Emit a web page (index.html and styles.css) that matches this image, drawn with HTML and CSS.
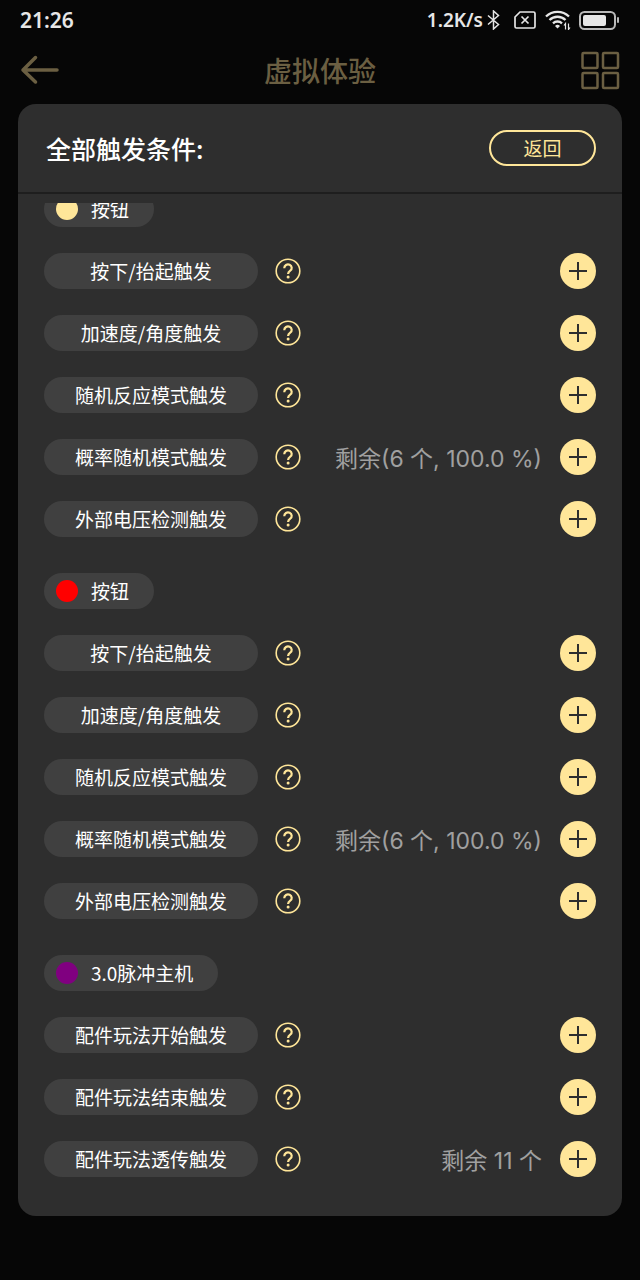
FILE: index.html
```html
<!DOCTYPE html>
<html lang="zh-CN">
<head>
	<meta charset="UTF-8">
	<meta name="viewport" content="width=device-width, initial-scale=1.0">
	<title>虚拟体验</title>
	<link rel="stylesheet" href="styles.css">
</head>

<body>
	<!-- Shared icons -->
	<svg class="sprite" aria-hidden="true">
		<symbol id="icon-help" viewBox="0 0 26 26">
			<circle cx="13" cy="13" r="11.8" fill="none" stroke="currentColor" stroke-width="1.6"/>
			<path d="M9.3 10.3v-.3a3.7 3.5 0 1 1 5.9 2.7c-1.4 1-2.1 1.6-2.1 3.3" fill="none" stroke="currentColor" stroke-width="2.2"/>
			<circle cx="13.1" cy="18.9" r="1.5" fill="currentColor"/>
		</symbol>
		<symbol id="icon-plus" viewBox="0 0 36 36">
			<path d="M18 9v18M9 18h18" fill="none" stroke="currentColor" stroke-width="2"/>
		</symbol>
	</svg>

	<div class="status-bar">
		<span class="status-time">21:26</span>
		<div class="status-icons">
			<span>1.2K/s</span>
			<svg class="icon-bt" width="13" height="20" viewBox="0 0 13 20" fill="none" stroke="currentColor" stroke-width="1.5">
				<path d="M1 5.5l10.5 9L6.5 19V1l5 4.5L1 14.5"/>
			</svg>
			<svg class="icon-sim" width="22" height="18" viewBox="0 0 22 18" fill="none" stroke="currentColor" stroke-width="1.7">
				<path d="M6 1h13.5A1.5 1.5 0 0 1 21 2.5v13a1.5 1.5 0 0 1-1.5 1.5h-17A1.5 1.5 0 0 1 1 15.5V6z"/>
				<path d="M7.5 5.5l7 7M14.5 5.5l-7 7"/>
			</svg>
			<svg class="icon-wifi" width="26" height="20" viewBox="0 0 26 20" fill="none" stroke="currentColor" stroke-width="2.3">
				<path d="M1 6.5a16.5 16.5 0 0 1 23 0M4.5 10a11.5 11.5 0 0 1 16 0M8 13.3a6.5 6.5 0 0 1 9 0"/>
				<path d="M12.5 18.5l-2.5-2.5a3.5 3.5 0 0 1 5 0z" fill="currentColor" stroke="none"/>
				<path d="M20.5 19.5v-6l-1.5 2M23.5 13.5v6l1.5-2" stroke-width="1.2"/>
			</svg>
			<svg class="icon-battery" width="41" height="19" viewBox="0 0 41 19">
				<rect x="1" y="1" width="35" height="17" rx="4.5" fill="none" stroke="#b8b8b8" stroke-width="2"/>
				<rect x="4" y="4" width="23" height="11" rx="2" fill="currentColor"/>
				<rect x="38" y="6" width="2" height="6" rx="1" fill="#b8b8b8"/>
			</svg>
		</div>
	</div>

	<header class="top-bar">
		<button class="icon-btn" aria-label="后退">
			<svg width="40" height="40" viewBox="0 0 40 40" fill="none" stroke="currentColor" stroke-width="3.5" stroke-linecap="round" stroke-linejoin="round">
				<path d="M37 20H3M15.5 7.5L3 20l12.5 12"/>
			</svg>
		</button>
		<h1>虚拟体验</h1>
		<button class="icon-btn" aria-label="菜单">
			<svg width="40" height="40" viewBox="0 0 40 40" fill="none" stroke="currentColor" stroke-width="2.5">
				<rect x="2.5" y="3" width="15" height="15" rx="1"/>
				<rect x="23" y="3" width="15" height="15" rx="1"/>
				<rect x="2.5" y="23" width="15" height="15" rx="1"/>
				<rect x="23" y="23" width="15" height="15" rx="1"/>
			</svg>
		</button>
	</header>

	<main class="panel">
		<div class="panel-head">
			<h2>全部触发条件:</h2>
			<button class="back-btn">返回</button>
		</div>

		<div class="panel-scroll">
			<div class="groups">
				<section class="group">
					<h3 class="chip"><i class="dot dot-yellow"></i>按钮</h3>
					<div class="row">
						<span class="pill">按下/抬起触发</span>
						<button class="help-btn" aria-label="说明"><svg><use href="#icon-help"/></svg></button>
						<button class="add-btn" aria-label="添加"><svg><use href="#icon-plus"/></svg></button>
					</div>
					<div class="row">
						<span class="pill">加速度/角度触发</span>
						<button class="help-btn" aria-label="说明"><svg><use href="#icon-help"/></svg></button>
						<button class="add-btn" aria-label="添加"><svg><use href="#icon-plus"/></svg></button>
					</div>
					<div class="row">
						<span class="pill">随机反应模式触发</span>
						<button class="help-btn" aria-label="说明"><svg><use href="#icon-help"/></svg></button>
						<button class="add-btn" aria-label="添加"><svg><use href="#icon-plus"/></svg></button>
					</div>
					<div class="row">
						<span class="pill">概率随机模式触发</span>
						<button class="help-btn" aria-label="说明"><svg><use href="#icon-help"/></svg></button>
						<span class="left">剩余(6 个, 100.0 %)</span>
						<button class="add-btn" aria-label="添加"><svg><use href="#icon-plus"/></svg></button>
					</div>
					<div class="row">
						<span class="pill">外部电压检测触发</span>
						<button class="help-btn" aria-label="说明"><svg><use href="#icon-help"/></svg></button>
						<button class="add-btn" aria-label="添加"><svg><use href="#icon-plus"/></svg></button>
					</div>
				</section>

				<section class="group">
					<h3 class="chip"><i class="dot dot-red"></i>按钮</h3>
					<div class="row">
						<span class="pill">按下/抬起触发</span>
						<button class="help-btn" aria-label="说明"><svg><use href="#icon-help"/></svg></button>
						<button class="add-btn" aria-label="添加"><svg><use href="#icon-plus"/></svg></button>
					</div>
					<div class="row">
						<span class="pill">加速度/角度触发</span>
						<button class="help-btn" aria-label="说明"><svg><use href="#icon-help"/></svg></button>
						<button class="add-btn" aria-label="添加"><svg><use href="#icon-plus"/></svg></button>
					</div>
					<div class="row">
						<span class="pill">随机反应模式触发</span>
						<button class="help-btn" aria-label="说明"><svg><use href="#icon-help"/></svg></button>
						<button class="add-btn" aria-label="添加"><svg><use href="#icon-plus"/></svg></button>
					</div>
					<div class="row">
						<span class="pill">概率随机模式触发</span>
						<button class="help-btn" aria-label="说明"><svg><use href="#icon-help"/></svg></button>
						<span class="left">剩余(6 个, 100.0 %)</span>
						<button class="add-btn" aria-label="添加"><svg><use href="#icon-plus"/></svg></button>
					</div>
					<div class="row">
						<span class="pill">外部电压检测触发</span>
						<button class="help-btn" aria-label="说明"><svg><use href="#icon-help"/></svg></button>
						<button class="add-btn" aria-label="添加"><svg><use href="#icon-plus"/></svg></button>
					</div>
				</section>

				<section class="group">
					<h3 class="chip"><i class="dot dot-purple"></i>3.0脉冲主机</h3>
					<div class="row">
						<span class="pill">配件玩法开始触发</span>
						<button class="help-btn" aria-label="说明"><svg><use href="#icon-help"/></svg></button>
						<button class="add-btn" aria-label="添加"><svg><use href="#icon-plus"/></svg></button>
					</div>
					<div class="row">
						<span class="pill">配件玩法结束触发</span>
						<button class="help-btn" aria-label="说明"><svg><use href="#icon-help"/></svg></button>
						<button class="add-btn" aria-label="添加"><svg><use href="#icon-plus"/></svg></button>
					</div>
					<div class="row">
						<span class="pill">配件玩法透传触发</span>
						<button class="help-btn" aria-label="说明"><svg><use href="#icon-help"/></svg></button>
						<span class="left">剩余 11 个</span>
						<button class="add-btn" aria-label="添加"><svg><use href="#icon-plus"/></svg></button>
					</div>
				</section>
			</div>
		</div>
	</main>
</body>
</html>
```

FILE: styles.css
```css
* {
	box-sizing: border-box;
}

body {
	margin: 0;
	min-height: 100vh;
	background: #060606;
	color: #fff;
	font-family: "Noto Sans CJK SC", sans-serif;
	font-size: 21px;
}

h1, h2, h3 {
	margin: 0;
}

button {
	padding: 0;
	border: 0;
	background: none;
	color: #ffe699;
	font-family: inherit;
	cursor: pointer;
}

svg {
	display: block;
}

.sprite {
	display: none;
}

/* Status bar */
.status-bar {
	display: flex;
	justify-content: space-between;
	align-items: center;
	height: 40px;
	padding: 0 20px;
	color: #e6e6e6;
	font-family: "Noto Sans", sans-serif;
	font-weight: 600;
	line-height: 40px;
}

.status-icons {
	display: flex;
	align-items: center;
	font-size: 19px;
}

.icon-bt {
	margin: 0 14px 0 4px;
}

.icon-sim {
	margin-right: 9px;
}

.icon-wifi {
	margin-right: 8px;
}

/* Title bar */
.top-bar {
	display: flex;
	justify-content: space-between;
	align-items: center;
	height: 64px;
	padding: 0 20px 4px;
}

.top-bar h1 {
	color: #6b5f42;
	font-size: 28px;
	font-weight: 500;
	line-height: 40px;
}

.icon-btn {
	color: #6b5f42;
}

/* Panel */
.panel {
	margin: 0 18px;
	border-radius: 18px;
	background: #2e2e2e;
}

.panel-head {
	display: flex;
	justify-content: space-between;
	align-items: center;
	height: 90px;
	padding: 0 26px 0 28px;
	border-bottom: 2px solid #1e1e1e;
}

.panel-head h2 {
	font-size: 25px;
	font-weight: 500;
}

.back-btn {
	width: 107px;
	height: 36px;
	border: 2px solid #ffe699;
	border-radius: 18px;
	font-size: 19px;
	line-height: 30px;
}

.panel-scroll {
	margin-top: 9px;
	padding: 0 26px 39px;
	overflow: hidden;
}

/* the list is scrolled a little, so the first chip is cut */
.groups {
	display: flex;
	flex-direction: column;
	gap: 36px;
	margin-top: -12px;
}

.group {
	display: flex;
	flex-direction: column;
	gap: 26px;
}

.chip {
	display: flex;
	align-items: center;
	align-self: flex-start;
	gap: 13px;
	height: 36px;
	padding: 0 25px 0 12px;
	border-radius: 18px;
	background: #404040;
	font-size: 19px;
	font-weight: 400;
	line-height: 36px;
}

.dot {
	width: 22px;
	height: 22px;
	border-radius: 50%;
}

.dot-yellow {
	background: #ffe699;
}

.dot-red {
	background: #ff0000;
}

.dot-purple {
	background: #800080;
}

.row {
	display: flex;
	align-items: center;
	height: 36px;
}

.pill {
	width: 214px;
	height: 36px;
	border-radius: 18px;
	background: #404040;
	font-size: 19px;
	line-height: 36px;
	text-align: center;
}

.help-btn {
	margin-left: 17px;
}

.help-btn svg {
	width: 26px;
	height: 26px;
}

.left {
	margin-left: auto;
	padding-top: 4px;
	color: #a0a0a0;
	font-family: Inter, "Noto Sans CJK SC", sans-serif;
	font-size: 23px;
	line-height: 36px;
}

.add-btn {
	margin-left: auto;
	border-radius: 50%;
	background: #ffe699;
	color: #2e2e2e;
}

.left + .add-btn {
	margin-left: 18px;
}

.add-btn svg {
	width: 36px;
	height: 36px;
}
```
